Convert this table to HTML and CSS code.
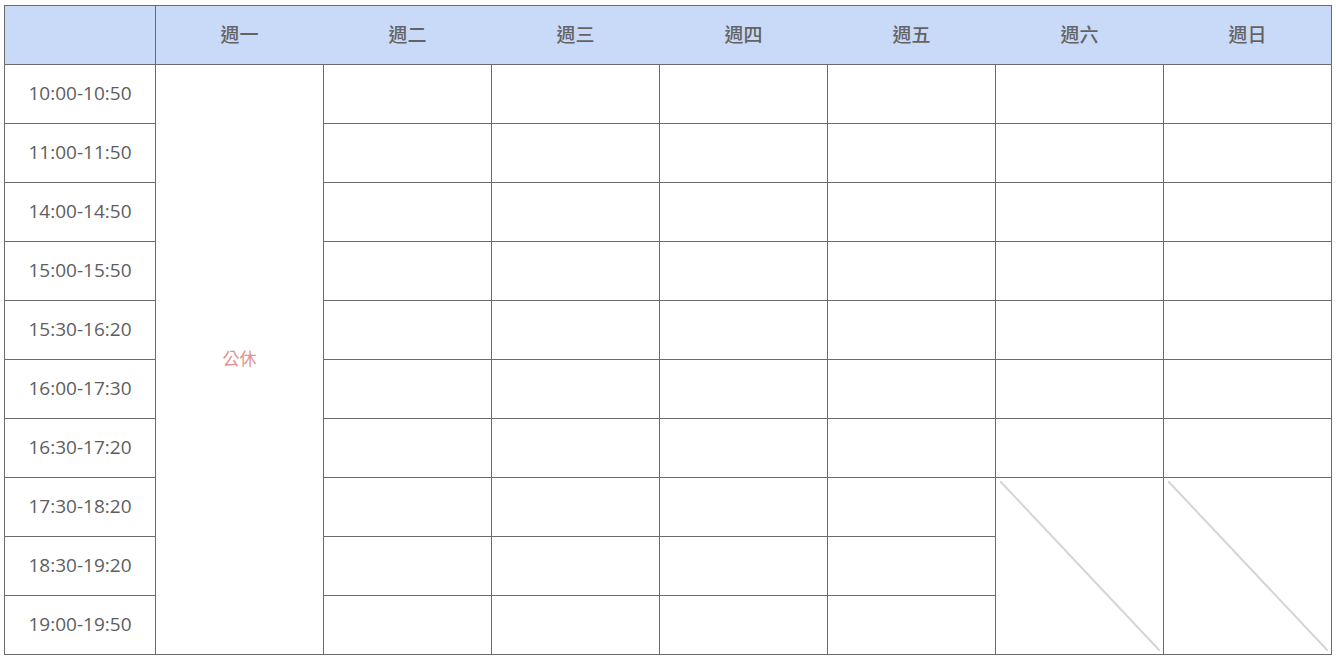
FILE: index.html
```html
<!DOCTYPE html>
<html lang="zh-Hant">
<head>
<meta charset="utf-8">
<link rel="stylesheet" href="styles.css">
<title>課表</title>
</head>
<body>
<div class="schedule">
  <div class="cell head"></div>
  <div class="days">
    <div class="day">週一</div>
    <div class="day">週二</div>
    <div class="day">週三</div>
    <div class="day">週四</div>
    <div class="day">週五</div>
    <div class="day">週六</div>
    <div class="day">週日</div>
  </div>

  <div class="cell time">10:00-10:50</div>
  <div class="cell off">公休</div>
  <div class="cell"></div><div class="cell"></div><div class="cell"></div><div class="cell"></div><div class="cell"></div><div class="cell"></div>

  <div class="cell time">11:00-11:50</div>
  <div class="cell"></div><div class="cell"></div><div class="cell"></div><div class="cell"></div><div class="cell"></div><div class="cell"></div>

  <div class="cell time">14:00-14:50</div>
  <div class="cell"></div><div class="cell"></div><div class="cell"></div><div class="cell"></div><div class="cell"></div><div class="cell"></div>

  <div class="cell time">15:00-15:50</div>
  <div class="cell"></div><div class="cell"></div><div class="cell"></div><div class="cell"></div><div class="cell"></div><div class="cell"></div>

  <div class="cell time">15:30-16:20</div>
  <div class="cell"></div><div class="cell"></div><div class="cell"></div><div class="cell"></div><div class="cell"></div><div class="cell"></div>

  <div class="cell time">16:00-17:30</div>
  <div class="cell"></div><div class="cell"></div><div class="cell"></div><div class="cell"></div><div class="cell"></div><div class="cell"></div>

  <div class="cell time">16:30-17:20</div>
  <div class="cell"></div><div class="cell"></div><div class="cell"></div><div class="cell"></div><div class="cell"></div><div class="cell"></div>

  <div class="cell time">17:30-18:20</div>
  <div class="cell"></div><div class="cell"></div><div class="cell"></div><div class="cell"></div>
  <div class="cell closed">
    <svg viewBox="0 0 100 100" preserveAspectRatio="none"><line x1="0" y1="0" x2="100" y2="100" vector-effect="non-scaling-stroke"/></svg>
  </div>
  <div class="cell closed">
    <svg viewBox="0 0 100 100" preserveAspectRatio="none"><line x1="0" y1="0" x2="100" y2="100" vector-effect="non-scaling-stroke"/></svg>
  </div>

  <div class="cell time">18:30-19:20</div>
  <div class="cell"></div><div class="cell"></div><div class="cell"></div><div class="cell"></div>

  <div class="cell time">19:00-19:50</div>
  <div class="cell"></div><div class="cell"></div><div class="cell"></div><div class="cell"></div>
</div>
</body>
</html>
```

FILE: styles.css
```css
html, body {
  margin: 0;
  padding: 0;
  background: #ffffff;
}

body {
  padding: 5px 0 0 4px;
  font-family: "Open Sans", "Noto Sans CJK TC", sans-serif;
}

.schedule {
  display: grid;
  grid-template-columns: 150px repeat(7, 167px);
  grid-template-rows: 58px repeat(10, 58px);
  gap: 1px;
  padding: 1px;
  background: #6b6b6b;
  width: max-content;
}

.cell {
  background: #ffffff;
  display: flex;
  align-items: center;
  justify-content: center;
  color: #5e5e5e;
  font-size: 19px;
}

.head {
  background: #c9daf8;
}

.days {
  grid-column: span 7;
  display: grid;
  grid-template-columns: repeat(7, 1fr);
  column-gap: 1px;
  background: #c9daf8;
}

.day {
  display: flex;
  align-items: center;
  justify-content: center;
  color: #636363;
  font-size: 19px;
  font-weight: 500;
  padding-bottom: 3px;
}

.time {
  font-weight: 500;
  padding-bottom: 2px;
}

.off {
  grid-row: span 10;
  color: #e39090;
  font-size: 17px;
  padding-bottom: 4px;
}

.closed {
  grid-row: span 3;
  padding: 3px 3px 3px 4px;
}

.closed svg {
  width: 100%;
  height: 100%;
  display: block;
}

.closed line {
  stroke: #d4d4d4;
  stroke-width: 2;
}
```
